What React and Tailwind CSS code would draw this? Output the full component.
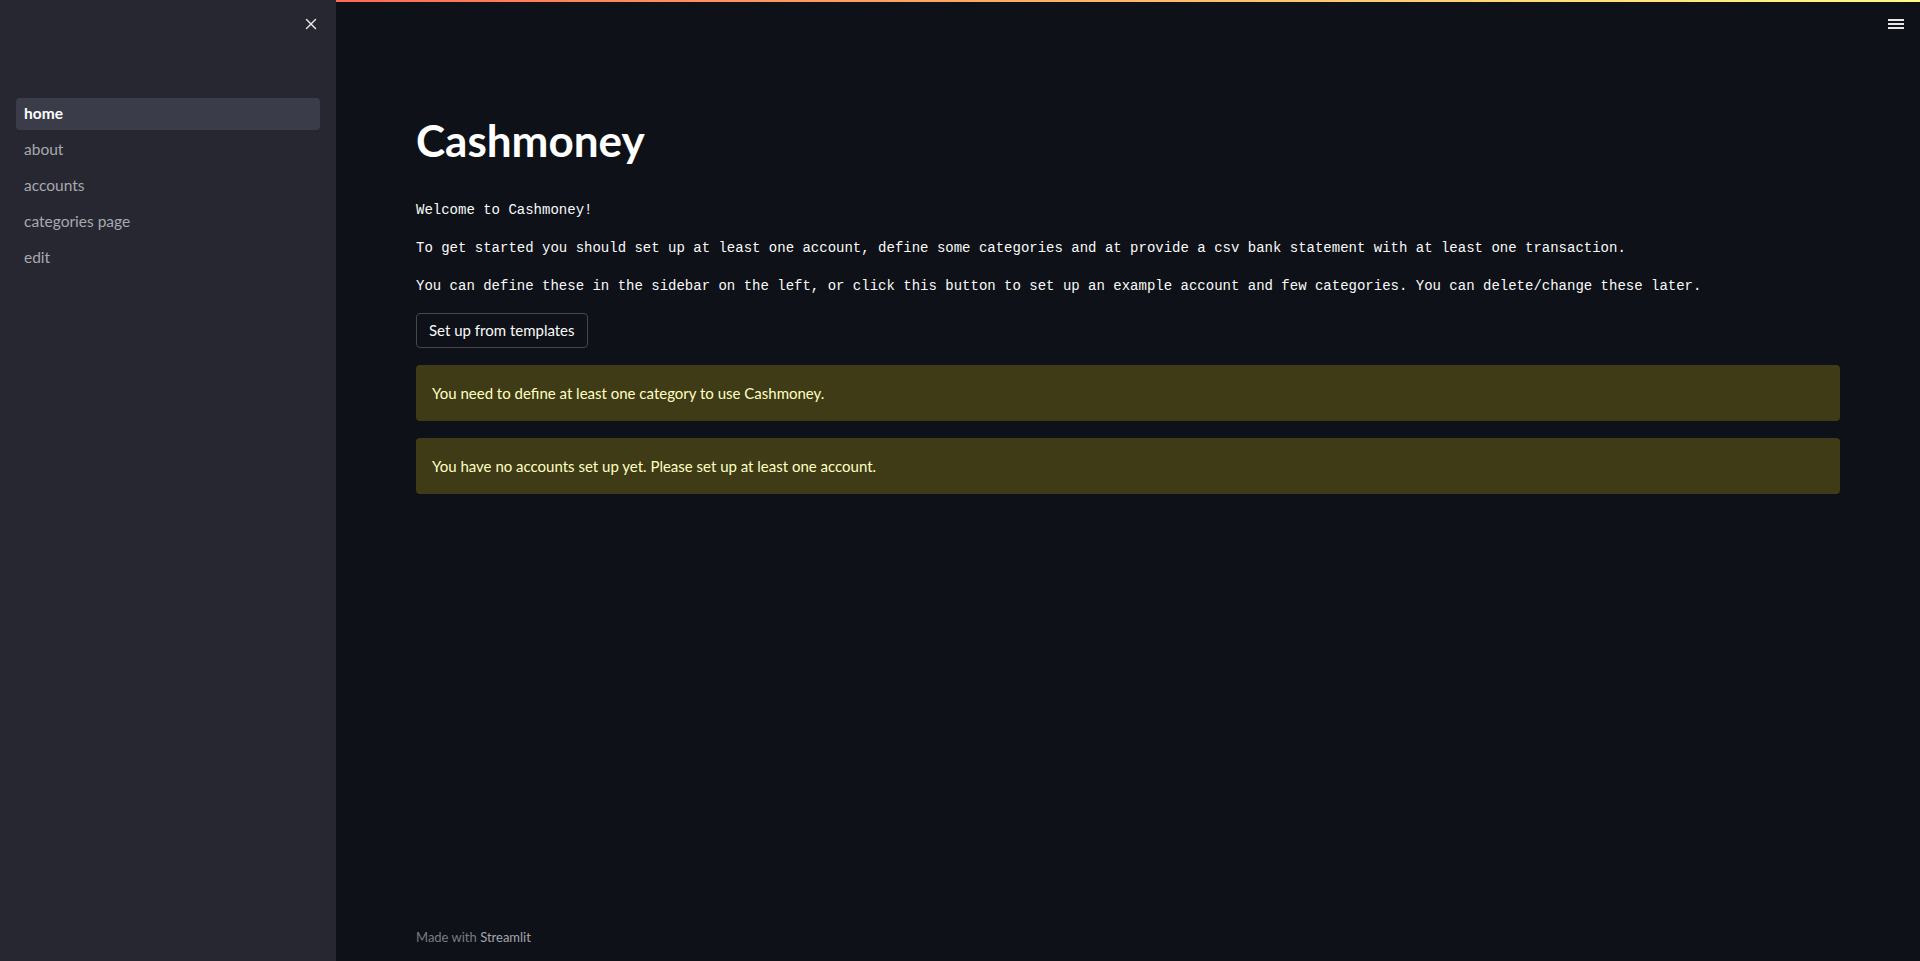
import { X } from 'lucide-react'

const navItems = ['home', 'about', 'accounts', 'categories page', 'edit']

export default function App() {
  const active = 'home'

  return (
    <div className="flex h-[961px] w-full overflow-hidden bg-[#0e1117] font-['Lato',sans-serif]">
      {/* sidebar */}
      <aside className="flex w-[336px] shrink-0 flex-col bg-[#262730]">
        <div className="flex h-[46px] items-center justify-end pr-[16px] pt-[2px]">
          <X size={18} strokeWidth={2} className="text-[#e6e6e6]" />
        </div>
        <nav className="mt-[52px] flex flex-col gap-[4px] px-[16px]">
          {navItems.map((item) => (
            <div
              key={item}
              className={
                item === active
                  ? 'flex h-[32px] items-center rounded-[4px] bg-[#3b3c4a] px-[8px] text-[15.5px] font-bold text-white'
                  : 'flex h-[32px] items-center rounded-[4px] px-[8px] text-[15.5px] text-[#a7a9b0]'
              }
            >
              {item}
            </div>
          ))}
        </nav>
      </aside>

      {/* main */}
      <main className="flex min-w-0 flex-1 flex-col">
        <div className="h-[2px] w-full bg-gradient-to-r from-[#ff6a55] to-[#fffd80]" />
        <div className="flex justify-end pr-[16px] pt-[16px]">
          <svg width="16" height="12" viewBox="0 0 16 12" className="text-[#e6e6e6]">
            <rect x="0" y="1" width="16" height="2" fill="currentColor" />
            <rect x="0" y="5" width="16" height="2" fill="currentColor" />
            <rect x="0" y="9" width="16" height="2" fill="currentColor" />
          </svg>
        </div>

        <div className="flex flex-1 flex-col px-[80px] pt-[84px]">
          <h1 className="mb-[32px] text-[44px] font-bold leading-[53px] text-white">Cashmoney</h1>

          <div className="flex flex-col gap-4">
            <p className="font-['Liberation_Mono',monospace] text-[14px] leading-[22px] text-[#fafafa]">
              Welcome to Cashmoney!
            </p>
            <p className="font-['Liberation_Mono',monospace] text-[14px] leading-[22px] text-[#fafafa]">
              To get started you should set up at least one account, define some categories and at provide a csv bank statement with at least one transaction.
            </p>
            <p className="font-['Liberation_Mono',monospace] text-[14px] leading-[22px] text-[#fafafa]">
              You can define these in the sidebar on the left, or click this button to set up an example account and few categories. You can delete/change these later.
            </p>
            <div>
              <button className="h-[35px] rounded-[4px] border border-[#45474d] bg-[#0e1117] px-[12px] text-[15px] text-[#fafafa]">
                Set up from templates
              </button>
            </div>
            <div className="mt-[1px] rounded-[4px] bg-[#3e3b16] px-[16px] py-[16px] text-[15px] leading-[24px] text-[#ffffc2]">
              You need to define at least one category to use Cashmoney.
            </div>
            <div className="mt-[1px] rounded-[4px] bg-[#3e3b16] px-[16px] py-[16px] text-[15px] leading-[24px] text-[#ffffc2]">
              You have no accounts set up yet. Please set up at least one account.
            </div>
          </div>

          <div className="mt-auto pb-[14px] text-[13px] text-[#7a7c82]">
            Made with <span className="text-[#a3a6ad]">Streamlit</span>
          </div>
        </div>
      </main>
    </div>
  )
}
